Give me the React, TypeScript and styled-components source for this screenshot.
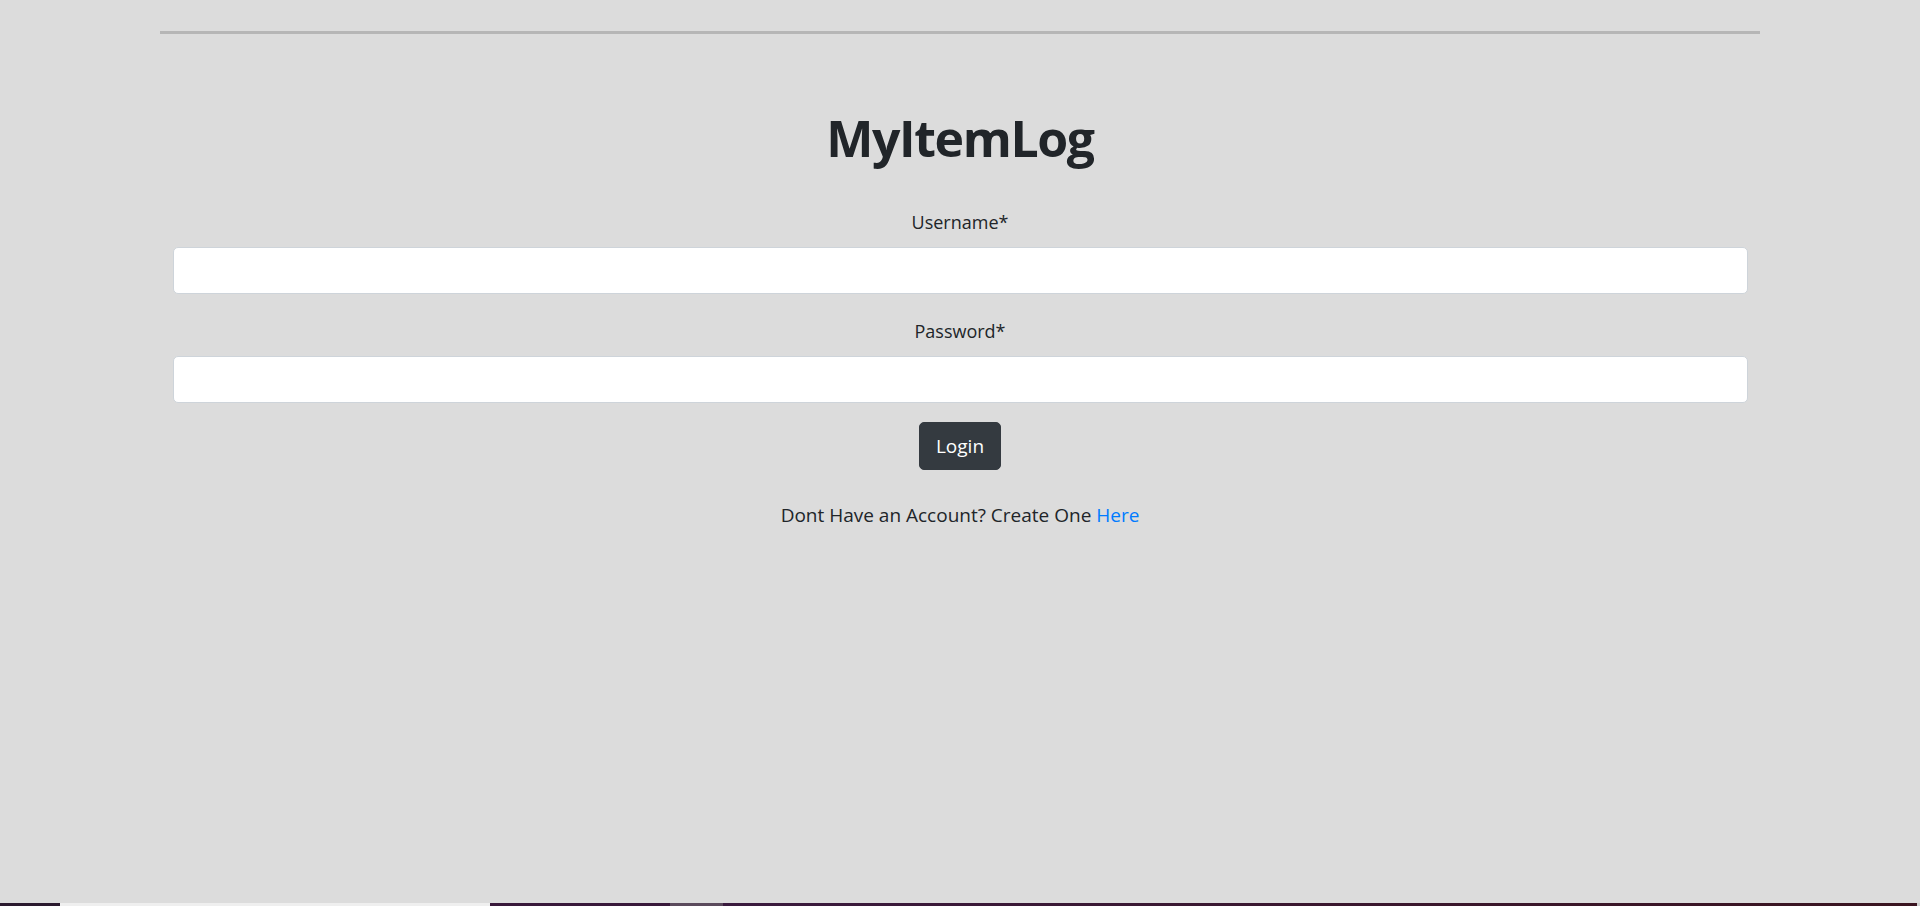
import React from "react";
import styled, { createGlobalStyle } from "styled-components";

const Global = createGlobalStyle`
  html, body { margin: 0; padding: 0; }
  body {
    background: #dcdcdc;
    font-family: "Open Sans", "Noto Sans", sans-serif;
    color: #212529;
  }
  * { box-sizing: border-box; }
`;

const Page = styled.div`
  min-height: 906px;
  display: flex;
  flex-direction: column;
`;

const Main = styled.main`
  flex: 1;
  width: 1600px;
  margin: 0 auto;
  padding-top: 31px;
`;

const Rule = styled.hr`
  margin: 0;
  height: 0;
  border: 0;
  border-top: 3px solid #b6b6b6;
`;

const Title = styled.h1`
  margin: 74px 0 0;
  text-align: center;
  font-size: 50px;
  line-height: 60px;
  font-weight: 700;
  letter-spacing: -1.4px;
  color: #212529;
`;

const Form = styled.form`
  width: 1575px;
  margin: 0 auto;
  display: flex;
  flex-direction: column;
  align-items: center;
`;

const Label = styled.label<{ $top: number }>`
  display: block;
  margin-top: ${(p) => p.$top}px;
  font-size: 18px;
  line-height: 30px;
  color: #212529;
  text-align: center;
`;

const Input = styled.input`
  display: block;
  width: 100%;
  height: 47px;
  margin-top: 10px;
  padding: 7px 15px;
  font-family: inherit;
  font-size: 20px;
  color: #495057;
  background: #fff;
  border: 1px solid #ced4da;
  border-radius: 5px;
  outline: none;
`;

const Button = styled.button`
  margin-top: 19px;
  height: 48px;
  width: 82px;
  padding: 0;
  font-family: inherit;
  font-size: 19px;
  line-height: 46px;
  color: #fff;
  background: #343a40;
  border: 1px solid #343a40;
  border-radius: 5px;
  cursor: pointer;
`;

const Note = styled.p`
  margin: 30px 0 0;
  font-size: 19px;
  line-height: 30px;
  text-align: center;
  color: #212529;
`;

const Link = styled.a`
  color: #007bff;
  text-decoration: none;
`;

const Strip = styled.div`
  height: 3px;
  display: flex;
`;

const Seg = styled.div<{ $w?: number; $bg: string }>`
  ${(p) => (p.$w ? `width: ${p.$w}px;` : "flex: 1;")}
  background: ${(p) => p.$bg};
`;

export default function App() {
  return (
    <Page>
      <Global />
      <Main>
        <Rule />
        <Title>MyItemLog</Title>
        <Form onSubmit={(e) => e.preventDefault()}>
          <Label $top={39} htmlFor="username">Username*</Label>
          <Input id="username" type="text" />
          <Label $top={22} htmlFor="password">Password*</Label>
          <Input id="password" type="password" />
          <Button type="submit">Login</Button>
          <Note>
            Dont Have an Account? Create One <Link href="#">Here</Link>
          </Note>
        </Form>
      </Main>
      <Strip>
        <Seg $w={60} $bg="#2b1a2f" />
        <Seg $w={430} $bg="#efefef" />
        <Seg $w={180} $bg="#38183a" />
        <Seg $w={53} $bg="#5b4a5c" />
        <Seg $bg="linear-gradient(90deg, #3a1a3e, #3a1420)" />
        <Seg $w={3} $bg="#cfcfcf" />
      </Strip>
    </Page>
  );
}
